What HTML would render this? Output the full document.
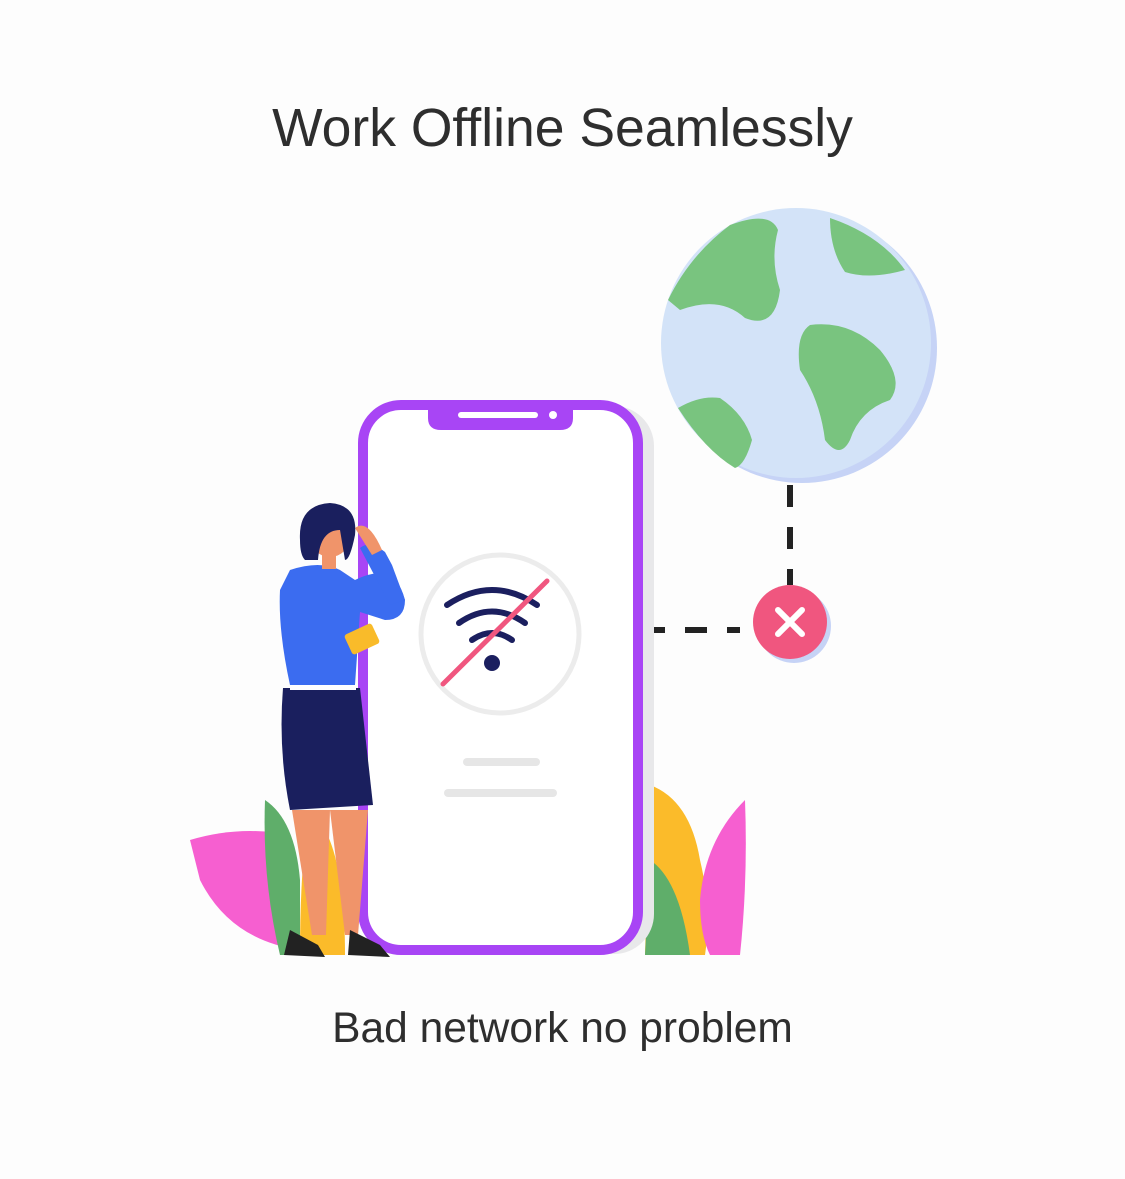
<!DOCTYPE html>
<html><head><meta charset="utf-8"><style>
html,body{margin:0;padding:0;background:#fdfdfd;width:1125px;height:1179px;overflow:hidden;font-family:"Liberation Sans",Arial,sans-serif;color:#333}
.t{position:absolute;left:0;width:1125px;text-align:center}
</style></head><body>
<div class="t" style="top:98px;font-size:53.5px;color:#2e2e2e">Work Offline Seamlessly</div>
<svg width="1125" height="1179" style="position:absolute;left:0;top:0">
<path d="M190 840 Q240 825 290 835 L300 950 Q230 940 200 880 Z" fill="#f65fd0"/>
<path d="M265 800 Q295 820 300 880 L300 955 L280 955 Q262 880 265 800Z" fill="#5fae6a"/>
<path d="M310 810 Q345 840 345 955 L300 955 Q300 860 310 810Z" fill="#fbbb2a"/>
<path d="M650 785 Q690 800 700 860 Q712 910 705 955 L645 955 Z" fill="#fbbb2a"/>
<path d="M650 860 Q680 880 690 955 L645 955Z" fill="#5fae6a"/>
<path d="M745 800 Q705 840 700 900 Q700 935 710 955 L740 955 Q748 880 745 800Z" fill="#f65fd0"/>
<circle cx="802" cy="348" r="135" fill="#c6d3f6"/>
<circle cx="796" cy="343" r="135" fill="#d3e3f8"/>
<path d="M668 300 Q690 255 730 225 Q770 210 778 230 Q770 260 780 290 Q775 330 745 318 Q720 295 680 310 Z" fill="#79c47f"/>
<path d="M830 218 Q880 235 905 270 Q870 280 845 272 Q830 250 830 218Z" fill="#79c47f"/>
<path d="M810 325 Q850 320 880 350 Q905 380 890 400 Q860 410 850 440 Q840 460 825 440 Q820 400 800 370 Q795 335 810 325Z" fill="#79c47f"/>
<path d="M678 408 Q700 395 720 398 Q745 415 752 440 Q745 465 735 468 Q705 450 678 408Z" fill="#79c47f"/>
<path d="M790 485 V585" stroke="#222" stroke-width="6" stroke-dasharray="22 20"/>
<path d="M643 630 H740" stroke="#222" stroke-width="6" stroke-dasharray="22 20"/>
<circle cx="794" cy="626" r="37" fill="#c6d3f6"/>
<circle cx="790" cy="622" r="37" fill="#f0567f"/>
<path d="M778 610 L802 634 M802 610 L778 634" stroke="#fff" stroke-width="6" stroke-linecap="round"/>
<rect x="372" y="406" width="282" height="548" rx="40" fill="#e8e8ea"/>
<rect x="363" y="405" width="275" height="545" rx="38" fill="#fff" stroke="#a845f5" stroke-width="10"/>
<path d="M428 405 H573 V418 Q573 430 560 430 H441 Q428 430 428 418 Z" fill="#a845f5"/>
<rect x="458" y="412" width="80" height="6" rx="3" fill="#fff"/>
<circle cx="553" cy="415" r="4" fill="#fff"/>
<circle cx="500" cy="634" r="79" fill="none" stroke="#ececec" stroke-width="5"/>
<path d="M447 605 Q492 575 537 605" stroke="#1b1f5f" stroke-width="6" fill="none" stroke-linecap="round"/>
<path d="M459 623 Q492 600 525 623" stroke="#1b1f5f" stroke-width="6" fill="none" stroke-linecap="round"/>
<path d="M472 640 Q492 626 512 640" stroke="#1b1f5f" stroke-width="6" fill="none" stroke-linecap="round"/>
<circle cx="492" cy="663" r="8" fill="#1b1f5f"/>
<path d="M443 684 L547 581" stroke="#f0567f" stroke-width="5" stroke-linecap="round"/>
<rect x="463" y="758" width="77" height="8" rx="4" fill="#e6e6e6"/>
<rect x="444" y="789" width="113" height="8" rx="4" fill="#e6e6e6"/>
<path d="M292 810 L330 810 L326 935 L312 935 Z" fill="#f0946a"/>
<path d="M330 810 L368 810 L358 935 L345 935 Z" fill="#f0946a"/>
<path d="M284 955 L290 930 L318 945 L325 957 Z" fill="#222"/>
<path d="M348 955 L350 930 L380 945 L390 957 Z" fill="#222"/>
<path d="M283 688 L360 688 L373 805 L290 810 Q278 750 283 688Z" fill="#1a1f5e"/>
<rect x="290" y="683" width="66" height="7" fill="#fff"/>
<path d="M290 570 Q320 560 340 570 L355 580 Q395 560 405 600 Q405 620 385 620 L360 612 L355 685 L290 685 Q278 630 280 590 Z" fill="#3b6cf0"/>
<path d="M360 548 Q370 540 385 552 L392 565 L405 600 L390 605 Z" fill="#3b6cf0"/>
<path d="M355 528 Q368 518 382 550 L372 555 Z" fill="#f0946a"/>
<rect x="347" y="628" width="30" height="22" rx="3" fill="#f9bb2a" transform="rotate(-25 362 639)"/>
<circle cx="330" cy="537" r="20" fill="#f0946a"/>
<path d="M300 540 Q298 505 330 503 Q358 505 355 535 Q350 560 345 560 L340 530 Q320 530 318 560 L305 560 Q300 555 300 540Z" fill="#1a1f5e"/>
<rect x="322" y="555" width="14" height="14" fill="#f0946a"/>
</svg>
<div class="t" style="top:1005px;font-size:42.5px;color:#2e2e2e">Bad network no problem</div>
</body></html>
